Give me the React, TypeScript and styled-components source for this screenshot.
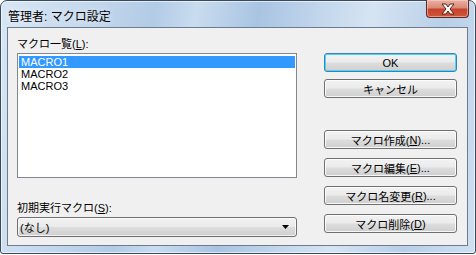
import styled, { createGlobalStyle } from "styled-components";

const GlobalStyle = createGlobalStyle`
    html, body {
        margin: 0;
        padding: 0;
        width: 476px;
        height: 255px;
        overflow: hidden;
        background: #ffffff;
    }
`;

const FONT = `"Liberation Sans", "Noto Sans CJK JP", sans-serif`;

const macros = ["MACRO1", "MACRO2", "MACRO3"];

const CloseGlyph = () => (
    <svg width="16" height="12" viewBox="0 0 16 12">
        <path d="M2 1 L6 1 L8 4 L10 1 L14 1 L10 6 L14 11 L10 11 L8 8 L6 11 L2 11 L6 6 Z"
              fill="#ffffff" stroke="#5a2418" strokeWidth="1" strokeLinejoin="round"/>
    </svg>
);

const Arrow = () => (
    <svg width="9" height="5" viewBox="0 0 9 5">
        <path d="M1 0 L8 0 L4.5 4 Z" fill="#000000"/>
    </svg>
);

// label with underlined access key
const KeyLabel = ({text, k, tail = ""}: { text: string, k: string, tail?: string }) => (
    <>
        {text}(<u>{k}</u>){tail}
    </>
);

const App = () => {
    return (
        <>
            <GlobalStyle/>
            <Frame>
                <TitleBar>
                    <Title>管理者: マクロ設定</Title>
                    <CloseButton><CloseGlyph/></CloseButton>
                </TitleBar>
                <Client>
                    <LeftColumn>
                        <FieldLabel><KeyLabel text="マクロ一覧" k="L" tail=":"/></FieldLabel>
                        <ListBox>
                            {macros.map((m, i) => (
                                <ListItem key={m} selected={i === 0}>{m}</ListItem>
                            ))}
                        </ListBox>
                        <FieldLabel><KeyLabel text="初期実行マクロ" k="S" tail=":"/></FieldLabel>
                        <Combo>
                            <span>(なし)</span>
                            <Arrow/>
                        </Combo>
                    </LeftColumn>
                    <RightColumn>
                        <ButtonGroup>
                            <DialogButton primary>OK</DialogButton>
                            <DialogButton>キャンセル</DialogButton>
                        </ButtonGroup>
                        <ButtonGroup wide>
                            <DialogButton><KeyLabel text="マクロ作成" k="N" tail="..."/></DialogButton>
                            <DialogButton><KeyLabel text="マクロ編集" k="E" tail="..."/></DialogButton>
                            <DialogButton><KeyLabel text="マクロ名変更" k="R" tail="..."/></DialogButton>
                            <DialogButton><KeyLabel text="マクロ削除" k="D"/></DialogButton>
                        </ButtonGroup>
                    </RightColumn>
                </Client>
            </Frame>
        </>
    )
};

export default App;

const Frame = styled.div`
    box-sizing: border-box;
    width: 476px;
    height: 254px;
    border: 1px solid #3a4a5e;
    border-radius: 7px 7px 3px 3px;
    background: linear-gradient(100deg, #d8e6f4 0%, #c3d7ec 18%, #b2cbe6 30%, #c9dcef 38%, #a9c4e2 50%, #c2d6ec 62%, #d6e4f2 72%, #b9cfe8 86%, #cfe0f1 100%);
    box-shadow: inset 0 0 0 1px rgba(255, 255, 255, 0.6);
    padding: 0 7px 7px 6px;
    display: flex;
    flex-direction: column;
    font-family: ${FONT};
`;

const TitleBar = styled.div`
    height: 28px;
    display: flex;
    align-items: flex-start;
    justify-content: space-between;
`;

const Title = styled.span`
    font-size: 12px;
    color: #000000;
    margin: 6px 0 0 1px;
    text-shadow: 0 0 6px rgba(255, 255, 255, 0.9);
`;

const CloseButton = styled.div`
    box-sizing: border-box;
    width: 43px;
    height: 18px;
    margin-top: -1px;
    margin-right: -1px;
    border: 1px solid #5c2a22;
    border-top: none;
    border-radius: 0 0 4px 4px;
    background: linear-gradient(#e8b2a6 0%, #d98a78 45%, #c7442c 55%, #d0553b 100%);
    box-shadow: inset 0 0 0 1px rgba(255, 220, 210, 0.5);
    display: flex;
    align-items: center;
    justify-content: center;
`;

const Client = styled.div`
    flex: 1;
    box-sizing: border-box;
    border: 1px solid #6d7b8c;
    background: #f0f0f0;
    display: flex;
    padding: 9px 10px 8px 9px;
    gap: 27px;
`;

const LeftColumn = styled.div`
    width: 280px;
    display: flex;
    flex-direction: column;
`;

const FieldLabel = styled.div`
    font-size: 11px;
    line-height: 14px;
    height: 14px;
    color: #000000;
    margin-bottom: 2px;

    & + div {
        flex-shrink: 0;
    }
`;

const ListBox = styled.div`
    box-sizing: border-box;
    height: 125px;
    border: 1px solid #828790;
    background: #ffffff;
    padding: 2px 1px 2px 1px;
    margin-bottom: 23px;
`;

const ListItem = styled.div<{ selected: boolean }>`
    font-size: 11px;
    line-height: 12px;
    height: 12px;
    padding-left: 2px;
    background: ${(props) => props.selected ? "#3399ff" : "transparent"};
    color: ${(props) => props.selected ? "#ffffff" : "#000000"};
`;

const Combo = styled.div`
    box-sizing: border-box;
    height: 20px;
    border: 1px solid #707070;
    border-radius: 3px;
    background: linear-gradient(#f2f2f2 0%, #ebebeb 48%, #dddddd 52%, #cfcfcf 100%);
    box-shadow: inset 0 0 0 1px rgba(255, 255, 255, 0.7);
    display: flex;
    align-items: center;
    justify-content: space-between;
    padding: 0 6px 0 2px;
    font-size: 11px;
    color: #000000;
`;

const RightColumn = styled.div`
    width: 133px;
    padding-top: 16px;
    display: flex;
    flex-direction: column;
    gap: 32px;
`;

const ButtonGroup = styled.div<{ wide?: boolean }>`
    display: flex;
    flex-direction: column;
    gap: ${(props) => props.wide ? "9px" : "7px"};
`;

const DialogButton = styled.div<{ primary?: boolean }>`
    box-sizing: border-box;
    height: 19px;
    border: 1px solid ${(props) => props.primary ? "#3c7fb1" : "#707070"};
    border-radius: 3px;
    background: linear-gradient(#f2f2f2 0%, #ebebeb 48%, #dddddd 52%, #cfcfcf 100%);
    box-shadow: inset 0 0 0 1px ${(props) => props.primary ? "#48d7fb" : "rgba(255, 255, 255, 0.8)"};
    display: flex;
    align-items: center;
    justify-content: center;
    font-size: 11px;
    color: #000000;
`;
